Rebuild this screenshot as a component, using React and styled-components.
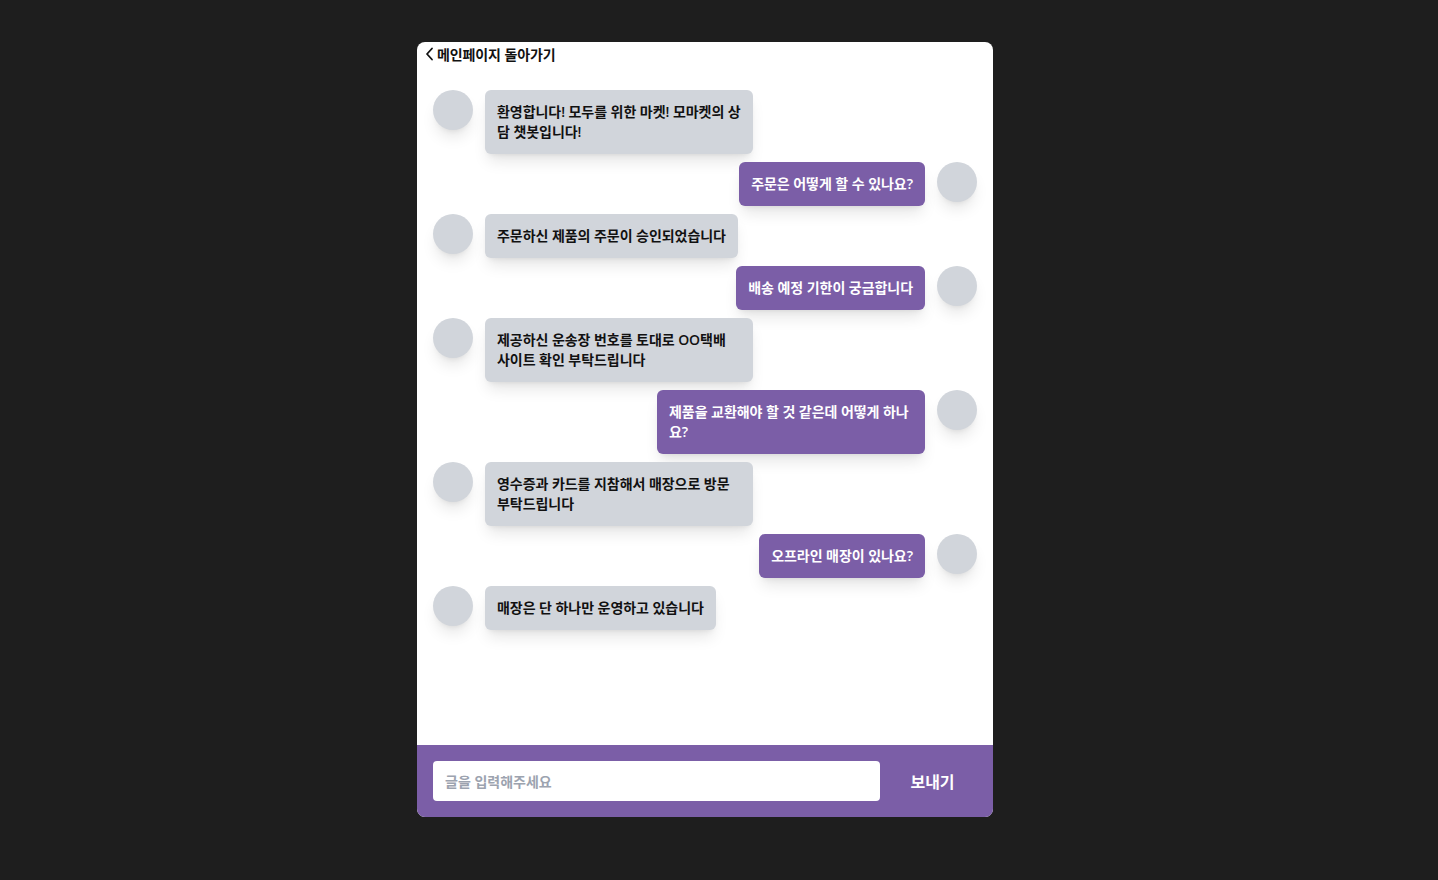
import React, { useState } from 'react';
import styled, { createGlobalStyle } from 'styled-components';

const GlobalStyle = createGlobalStyle`
  html, body {
    margin: 0;
    padding: 0;
    background: #1e1e1e;
    font-family: "Open Sans", "Noto Sans CJK KR", sans-serif;
  }
  * { box-sizing: border-box; }
`;

// 대화 데이터
const messages = [
  { id: 1, mine: false, text: '환영합니다! 모두를 위한 마켓! 모마켓의 상담 챗봇입니다!' },
  { id: 2, mine: true, text: '주문은 어떻게 할 수 있나요?' },
  { id: 3, mine: false, text: '주문하신 제품의 주문이 승인되었습니다' },
  { id: 4, mine: true, text: '배송 예정 기한이 궁금합니다' },
  { id: 5, mine: false, text: '제공하신 운송장 번호를 토대로 OO택배 사이트 확인 부탁드립니다' },
  { id: 6, mine: true, text: '제품을 교환해야 할 것 같은데 어떻게 하나요?' },
  { id: 7, mine: false, text: '영수증과 카드를 지참해서 매장으로 방문 부탁드립니다' },
  { id: 8, mine: true, text: '오프라인 매장이 있나요?' },
  { id: 9, mine: false, text: '매장은 단 하나만 운영하고 있습니다' },
];

const ChatPage = () => {
  const [text, setText] = useState('');

  return (
    <Page>
      <GlobalStyle />
      <ChatBox>
        <BackLink href="#">
          <svg width="9" height="14" viewBox="0 0 9 14" fill="none">
            <path d="M7 1.5L2 7l5 5.5" stroke="#111" strokeWidth="1.8" strokeLinecap="round" strokeLinejoin="round" />
          </svg>
          메인페이지 돌아가기
        </BackLink>

        <MessageList>
          {messages.map((m) => (
            <Row key={m.id} mine={m.mine}>
              <Avatar />
              <Bubble mine={m.mine}>{m.text}</Bubble>
            </Row>
          ))}
        </MessageList>

        <InputBar onSubmit={(e) => e.preventDefault()}>
          <TextInput
            placeholder="글을 입력해주세요"
            value={text}
            onChange={(e) => setText(e.target.value)}
          />
          <SendButton type="submit">보내기</SendButton>
        </InputBar>
      </ChatBox>
    </Page>
  );
};

const Page = styled.div`
  display: flex;
  justify-content: center;
  padding: 42px 28px 0 0;
  min-height: 100vh;
`;

const ChatBox = styled.div`
  width: 576px;
  height: 775px;
  background: #fff;
  border-radius: 8px;
  overflow: hidden;
  display: flex;
  flex-direction: column;
`;

const BackLink = styled.a`
  display: flex;
  align-items: center;
  gap: 3px;
  height: 24px;
  padding: 0 8px;
  font-size: 14px;
  font-weight: 600;
  letter-spacing: -0.1px;
  color: #111;
  text-decoration: none;
`;

const MessageList = styled.div`
  flex: 1;
  display: flex;
  flex-direction: column;
  gap: 8px;
  padding: 24px 16px;
  overflow: hidden;
`;

const Row = styled.div`
  display: flex;
  align-items: flex-start;
  gap: 12px;
  flex-direction: ${(p) => (p.mine ? 'row-reverse' : 'row')};
`;

const Avatar = styled.div`
  width: 40px;
  height: 40px;
  flex-shrink: 0;
  border-radius: 50%;
  background: #d1d5db;
  box-shadow: 0 10px 15px -3px rgba(0, 0, 0, 0.1), 0 4px 6px -4px rgba(0, 0, 0, 0.1);
`;

const Bubble = styled.div`
  max-width: 268px;
  padding: 12px;
  border-radius: 6px;
  font-size: 14px;
  line-height: 20px;
  font-weight: 600;
  letter-spacing: -0.05px;
  background: ${(p) => (p.mine ? '#7b5ea7' : '#d1d5db')};
  color: ${(p) => (p.mine ? '#fff' : '#111')};
  box-shadow: 0 10px 15px -3px rgba(0, 0, 0, 0.1), 0 4px 6px -4px rgba(0, 0, 0, 0.1);
`;

const InputBar = styled.form`
  height: 72px;
  flex-shrink: 0;
  display: flex;
  align-items: center;
  padding: 0 16px;
  background: #7b5ea7;
`;

const TextInput = styled.input`
  flex: 1;
  height: 40px;
  border: none;
  border-radius: 4px;
  padding: 0 12px;
  font-family: inherit;
  font-size: 14px;
  font-weight: 600;
  outline: none;
  &::placeholder {
    color: #9ca3af;
  }
`;

const SendButton = styled.button`
  width: 89px;
  margin-left: 8px;
  border: none;
  background: transparent;
  color: #fff;
  font-family: inherit;
  font-size: 16px;
  font-weight: 700;
  cursor: pointer;
`;

export default ChatPage;
